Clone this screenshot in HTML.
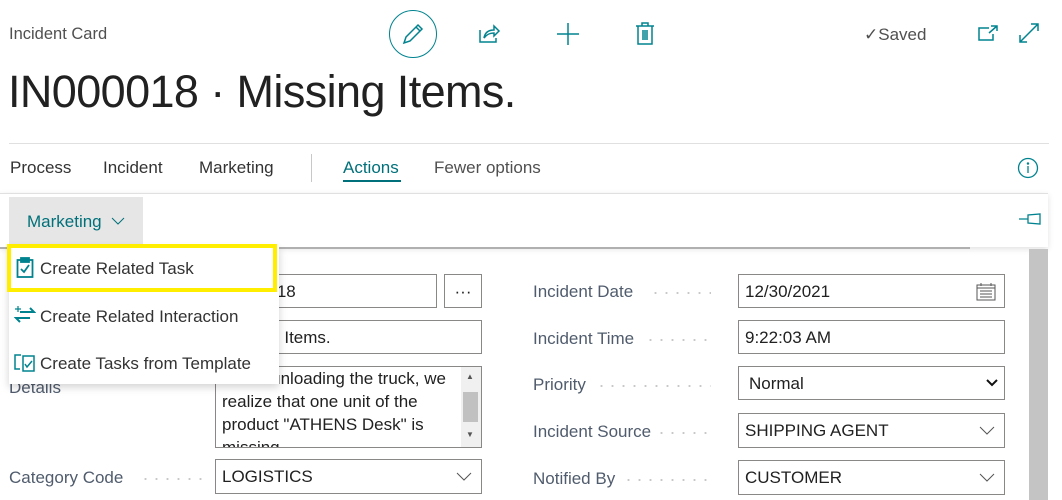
<!DOCTYPE html>
<html><head><style>
*{box-sizing:border-box;margin:0;padding:0}
body{width:1062px;height:500px;overflow:hidden;background:#fff;font-family:"Liberation Sans",sans-serif;color:#212121;position:relative}
.a{position:absolute}
.lbl{position:absolute;font-size:17px;color:#505c6d;white-space:nowrap}
.dots{position:absolute;height:2px;background-image:radial-gradient(circle,#c8c8c8 1px,transparent 1.2px);background-size:11px 2px}
.in{position:absolute;border:1px solid #8a8886;background:#fff;font-size:17px;padding:0 6px;line-height:33px;white-space:nowrap;overflow:hidden;color:#212121}
.tab{position:absolute;top:158px;font-size:17px;color:#333}
.mi{position:absolute;left:40px;font-size:17px;color:#333}
.chev{position:absolute}
</style></head><body>
<div class="a" style="left:9px;top:25px;font-size:16.5px;color:#505050">Incident Card</div>
<div class="a" style="left:389px;top:10px;width:48px;height:48px;border:1.5px solid #00838f;border-radius:50%"></div>
<svg class="a" style="left:400px;top:22px" width="26" height="24" viewBox="0 0 26 24" fill="none" stroke="#00838f" stroke-width="1.5"><path d="M4 21 L6 15 L18 3 L22 7 L10 19 Z M16 5 L20 9"/></svg>
<svg class="a" style="left:478px;top:22px" width="24" height="22" viewBox="0 0 24 22" fill="none" stroke="#00838f" stroke-width="1.5"><path d="M2 8 V20 H18 V16 M6 16 C7 10 11 8 16 8 V4 L21 9 L16 14 V11 C12 11 9 12 6 16Z"/></svg>
<svg class="a" style="left:556px;top:22px" width="24" height="24" stroke="#00838f" stroke-width="1.5"><path d="M12 1 V23 M1 12 H23"/></svg>
<svg class="a" style="left:635px;top:22px" width="20" height="24" fill="none" stroke="#00838f" stroke-width="1.5"><path d="M1 4 H19 M7 4 V1 H13 V4 M3 4 V22 H17 V4 M8 8 V18 M10 8 V18 M12 8 V18"/></svg>
<div class="a" style="left:864px;top:25px;font-size:17px;color:#505050">✓Saved</div>
<svg class="a" style="left:977px;top:24px" width="22" height="18" fill="none" stroke="#00838f" stroke-width="1.5"><path d="M12 4 H2 V16 H16 V10 M14 2 H20 V7 M20 2 L12 9"/></svg>
<svg class="a" style="left:1018px;top:22px" width="22" height="22" fill="none" stroke="#00838f" stroke-width="1.5"><path d="M2 20 L20 2 M13 2 H20 V9 M2 13 V20 H9"/></svg>
<div class="a" style="left:8px;top:66px;font-size:45px;color:#212121;letter-spacing:-0.6px">IN000018 · Missing Items.</div>
<div class="a" style="left:9px;top:143px;width:1040px;height:1px;background:#e0e0e0"></div>
<div class="tab" style="left:10px">Process</div>
<div class="tab" style="left:103px">Incident</div>
<div class="tab" style="left:199px">Marketing</div>
<div class="a" style="left:311px;top:154px;width:1px;height:28px;background:#c8c8c8"></div>
<div class="tab" style="left:343px;color:#00707a">Actions</div>
<div class="a" style="left:343px;top:180px;width:58px;height:2px;background:#00707a"></div>
<div class="tab" style="left:434px;color:#505050">Fewer options</div>
<svg class="a" style="left:1017px;top:157px" width="22" height="22" fill="none" stroke="#00838f" stroke-width="1.3"><circle cx="11" cy="11" r="9.5"/><path d="M11 9 V16"/><circle cx="11" cy="6.5" r="0.6" fill="#00838f"/></svg>
<div class="a" style="left:0;top:193px;width:1048px;height:54px;background:#fff;box-shadow:0 2px 6px rgba(0,0,0,.12);border-top:1px solid #e0e0e0"></div>
<div class="a" style="left:0;top:247px;width:970px;height:2px;background:#b0b0b0"></div>
<div class="a" style="left:1029px;top:249px;width:19px;height:251px;background:#c4c4c4"></div>
<div class="a" style="left:9px;top:197px;width:134px;height:47px;background:#e6e6e6"></div>
<div class="a" style="left:27px;top:212px;font-size:17px;color:#00707a">Marketing</div>
<svg class="chev" style="left:111px;top:217px" width="14" height="9" fill="none" stroke="#00707a" stroke-width="1"><path d="M1 1 L7 7 L13 1"/></svg>
<svg class="a" style="left:1018px;top:212px" width="24" height="14" fill="none" stroke="#00838f" stroke-width="1.3"><path d="M1 7 H10 M10 3 V11 L22 12 V2 Z"/></svg>
<!-- fields -->
<div class="in" style="left:215px;top:274px;width:222px;height:34px">IN000018</div>
<div class="in" style="left:444px;top:274px;width:38px;height:34px;text-align:center;padding:0">···</div>
<div class="in" style="left:215px;top:320px;width:267px;height:34px">Missing Items.</div>
<div class="in" style="left:215px;top:366px;width:267px;height:82px;line-height:23px;white-space:normal;padding:0 24px 0 6px">When unloading the truck, we realize that one unit of the product "ATHENS Desk" is missing</div>
<div class="a" style="left:461px;top:367px;width:20px;height:80px;background:#f0f0f0"></div>
<div class="a" style="left:463px;top:392px;width:15px;height:30px;background:#c1c1c1"></div>
<div class="a" style="left:466px;top:372px;font-size:8px;color:#555">▲</div>
<div class="a" style="left:466px;top:430px;font-size:8px;color:#555">▼</div>
<div class="lbl" style="left:9px;top:378px">Details</div>
<div class="lbl" style="left:9px;top:468px">Category Code</div><div class="dots" style="left:140px;top:478px;width:66px"></div>
<div class="in" style="left:215px;top:459px;width:267px;height:35px">LOGISTICS</div>
<svg class="chev" style="left:456px;top:472px" width="16" height="9" fill="none" stroke="#555" stroke-width="1"><path d="M1 1 L8 8 L15 1"/></svg>
<div class="lbl" style="left:533px;top:282px">Incident Date</div><div class="dots" style="left:650px;top:292px;width:61px"></div>
<div class="in" style="left:738px;top:274px;width:267px;height:34px">12/30/2021</div>
<svg class="a" style="left:976px;top:282px" width="20" height="19" fill="none" stroke="#555" stroke-width="1"><rect x="1" y="3" width="18" height="15"/><path d="M1 6 H19 M5 1 V4 M15 1 V4 M4 9 H16 M4 12 H16 M4 15 H16"/></svg>
<div class="lbl" style="left:533px;top:329px">Incident Time</div><div class="dots" style="left:645px;top:339px;width:66px"></div>
<div class="in" style="left:738px;top:320px;width:267px;height:34px">9:22:03 AM</div>
<div class="lbl" style="left:533px;top:375px">Priority</div><div class="dots" style="left:596px;top:385px;width:115px"></div>
<div class="in" style="left:738px;top:366px;width:267px;height:34px;padding-left:10px">Normal</div>
<svg class="a" style="left:985px;top:378px" width="14" height="10" fill="none" stroke="#111" stroke-width="2"><path d="M2 2 L7 7 L12 2"/></svg>
<div class="lbl" style="left:533px;top:422px">Incident Source</div><div class="dots" style="left:656px;top:432px;width:55px"></div>
<div class="in" style="left:738px;top:413px;width:267px;height:35px">SHIPPING AGENT</div>
<svg class="chev" style="left:979px;top:426px" width="16" height="9" fill="none" stroke="#555" stroke-width="1"><path d="M1 1 L8 8 L15 1"/></svg>
<div class="lbl" style="left:533px;top:469px">Notified By</div><div class="dots" style="left:623px;top:479px;width:88px"></div>
<div class="in" style="left:738px;top:460px;width:267px;height:35px">CUSTOMER</div>
<svg class="chev" style="left:979px;top:473px" width="16" height="9" fill="none" stroke="#555" stroke-width="1"><path d="M1 1 L8 8 L15 1"/></svg>
<!-- menu -->
<div class="a" style="left:9px;top:246px;width:270px;height:138px;background:#fff;box-shadow:0 3px 8px rgba(0,0,0,.18)"></div>
<div class="a" style="left:7px;top:244px;width:270px;height:48px;border:4px solid #ffee00"></div>
<svg class="a" style="left:16px;top:257px" width="18" height="22" fill="none" stroke="#00838f" stroke-width="1.8"><rect x="1.5" y="3" width="15" height="17"/><rect x="5" y="1" width="8" height="4" fill="#00838f"/><path d="M5 12 L8 15 L13 8"/></svg>
<div class="mi" style="top:259px">Create Related Task</div>
<svg class="a" style="left:14px;top:305px" width="22" height="20" fill="none" stroke="#00838f" stroke-width="2"><path d="M6 7 H20 L16 3 M16 13 H2 L6 17"/><path d="M4 1 V7 M1 4 H7" stroke-width="1.2"/></svg>
<div class="mi" style="top:307px">Create Related Interaction</div>
<svg class="a" style="left:14px;top:351px" width="22" height="22" fill="none" stroke="#00838f" stroke-width="1.5"><path d="M4 4 H1 V18 H6 M4 4 H7"/><rect x="9" y="5" width="11" height="15"/><path d="M11 13 L13 16 L18 10"/></svg>
<div class="mi" style="top:354px">Create Tasks from Template</div>
</body></html>
